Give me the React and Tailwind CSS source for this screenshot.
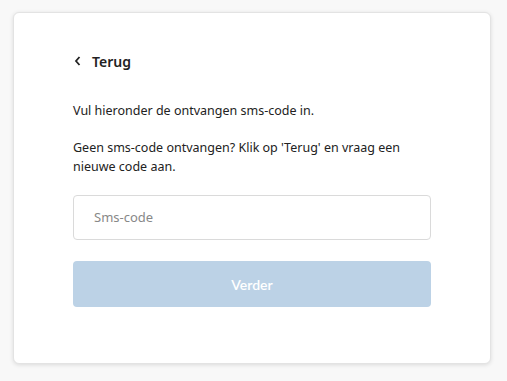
import React from "react";

export default function App() {
  return (
    <div className="min-h-[381px] w-[507px] bg-[#f8f8f8] pt-[12px] pl-[13px]" style={{ fontFamily: '"Noto Sans", sans-serif' }}>
      <div className="w-[478px] h-[352px] bg-white rounded-[6px] border border-[#e3e3e3] shadow-[0_1px_4px_rgba(0,0,0,0.12)] pl-[59px] pr-[59px] pt-[39px]">
        <div className="flex items-center gap-[10px] h-[18px] text-[14px] font-semibold text-[#222]">
          <svg width="8" height="10" viewBox="0 0 8 10" className="ml-[1px]">
            <path d="M5.5 1 L2 5 L5.5 9" stroke="#222" strokeWidth="1.8" fill="none" />
          </svg>
          <span>Terug</span>
        </div>
        <p className="mt-[31px] text-[12.5px] leading-[19px] text-[#222]">Vul hieronder de ontvangen sms-code in.</p>
        <p className="mt-[18px] text-[12.5px] leading-[19px] text-[#222]">Geen sms-code ontvangen? Klik op 'Terug' en vraag een nieuwe code aan.</p>
        <div className="mt-[19px] h-[45px] w-[358px] border border-[#dadada] rounded-[4px] flex items-center pl-[20px] text-[13px] text-[#888]">
          Sms-code
        </div>
        <div className="mt-[21px] h-[46px] w-[358px] rounded-[4px] bg-[#bcd2e6] flex items-center justify-center text-white text-[14px] font-semibold" style={{ fontFamily: 'Lato, sans-serif' }}>
          Verder
        </div>
      </div>
    </div>
  );
}
